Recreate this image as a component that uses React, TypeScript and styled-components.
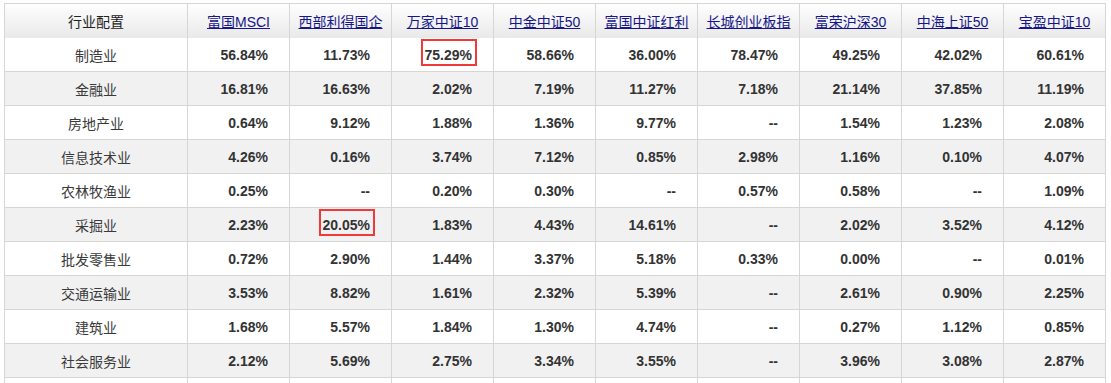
import React from "react";
import styled, { createGlobalStyle } from "styled-components";

const GlobalStyle = createGlobalStyle`
  html, body { margin: 0; padding: 0; background: #ffffff; }
  body { font-family: "Liberation Sans", Arial, "Noto Sans CJK SC", sans-serif; }
`;

const Page = styled.div`
  padding: 3px 0 0 4px;
`;

const Grid = styled.div`
  display: grid;
  grid-template-columns: 182px repeat(9, 101px);
  grid-auto-rows: 33px;
  gap: 1px;
  padding: 1px;
  width: max-content;
  background: #d6d6d6;
`;

const HeadCell = styled.div`
  height: 34px;
  display: flex;
  align-items: center;
  justify-content: center;
  font-size: 14px;
  color: #222;
  background: linear-gradient(#fefefe, #e9e9e9);
`;

const HeadLink = styled.a`
  color: #16168a;
  text-decoration: underline;
  cursor: pointer;
`;

const NameCell = styled.div<{ $alt: boolean }>`
  display: flex;
  align-items: center;
  justify-content: center;
  font-size: 14px;
  color: #3a3a3a;
  background: ${(p) => (p.$alt ? "#f1f1f1" : "#ffffff")};
`;

const ValueCell = styled.div<{ $alt: boolean }>`
  display: flex;
  align-items: center;
  justify-content: flex-end;
  padding-right: 21px;
  font-size: 14px;
  font-weight: bold;
  color: #333;
  background: ${(p) => (p.$alt ? "#f1f1f1" : "#ffffff")};
`;

const Highlight = styled.span`
  position: relative;
  &::after {
    content: "";
    position: absolute;
    left: -4px;
    right: -5px;
    top: -8px;
    bottom: -3px;
    border: 2px solid #f03a3a;
  }
`;

const BlankCell = styled.div`
  background: #ffffff;
`;

const headers = [
  "富国MSCI",
  "西部利得国企",
  "万家中证10",
  "中金中证50",
  "富国中证红利",
  "长城创业板指",
  "富荣沪深30",
  "中海上证50",
  "宝盈中证10",
];

type Row = { name: string; values: string[]; mark?: number };

const rows: Row[] = [
  { name: "制造业", values: ["56.84%", "11.73%", "75.29%", "58.66%", "36.00%", "78.47%", "49.25%", "42.02%", "60.61%"], mark: 2 },
  { name: "金融业", values: ["16.81%", "16.63%", "2.02%", "7.19%", "11.27%", "7.18%", "21.14%", "37.85%", "11.19%"] },
  { name: "房地产业", values: ["0.64%", "9.12%", "1.88%", "1.36%", "9.77%", "--", "1.54%", "1.23%", "2.08%"] },
  { name: "信息技术业", values: ["4.26%", "0.16%", "3.74%", "7.12%", "0.85%", "2.98%", "1.16%", "0.10%", "4.07%"] },
  { name: "农林牧渔业", values: ["0.25%", "--", "0.20%", "0.30%", "--", "0.57%", "0.58%", "--", "1.09%"] },
  { name: "采掘业", values: ["2.23%", "20.05%", "1.83%", "4.43%", "14.61%", "--", "2.02%", "3.52%", "4.12%"], mark: 1 },
  { name: "批发零售业", values: ["0.72%", "2.90%", "1.44%", "3.37%", "5.18%", "0.33%", "0.00%", "--", "0.01%"] },
  { name: "交通运输业", values: ["3.53%", "8.82%", "1.61%", "2.32%", "5.39%", "--", "2.61%", "0.90%", "2.25%"] },
  { name: "建筑业", values: ["1.68%", "5.57%", "1.84%", "1.30%", "4.74%", "--", "0.27%", "1.12%", "0.85%"] },
  { name: "社会服务业", values: ["2.12%", "5.69%", "2.75%", "3.34%", "3.55%", "--", "3.96%", "3.08%", "2.87%"] },
];

export default function App() {
  return (
    <>
      <GlobalStyle />
      <Page>
        <Grid>
          <HeadCell>行业配置</HeadCell>
          {headers.map((h) => (
            <HeadCell key={h}>
              <HeadLink>{h}</HeadLink>
            </HeadCell>
          ))}
          {rows.map((r, i) => {
            const alt = i % 2 === 1;
            return (
              <React.Fragment key={r.name}>
                <NameCell $alt={alt}>{r.name}</NameCell>
                {r.values.map((v, j) => (
                  <ValueCell key={j} $alt={alt}>
                    {r.mark === j ? <Highlight>{v}</Highlight> : v}
                  </ValueCell>
                ))}
              </React.Fragment>
            );
          })}
          {Array.from({ length: 10 }).map((_, k) => (
            <BlankCell key={`b${k}`} />
          ))}
        </Grid>
      </Page>
    </>
  );
}
